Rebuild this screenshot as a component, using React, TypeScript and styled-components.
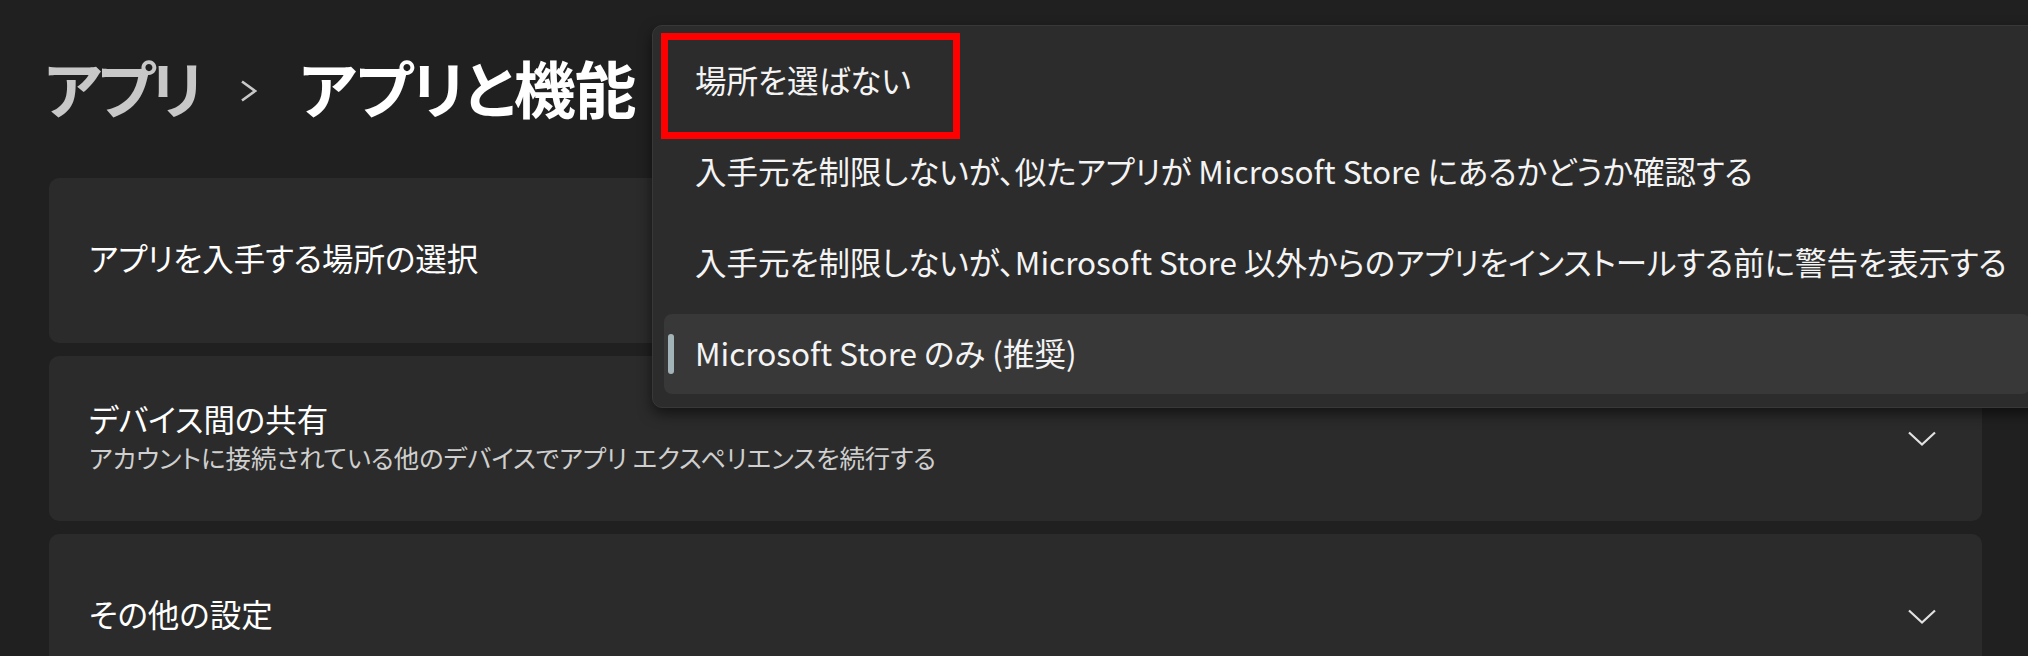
import React from "react";
import styled, { createGlobalStyle } from "styled-components";

const Global = createGlobalStyle`
  html, body {
    margin: 0;
    padding: 0;
    background: #202020;
    overflow: hidden;
  }
  body {
    width: 2028px;
    height: 656px;
    font-family: "Noto Sans CJK JP", "Noto Sans", sans-serif;
    font-feature-settings: "palt";
    color: #ffffff;
  }
`;

const Page = styled.div`
  position: relative;
  width: 2028px;
  height: 656px;
  box-sizing: border-box;
  padding: 0 46px 0 49px;
  overflow: hidden;
`;

const Header = styled.div`
  height: 178px;
  display: flex;
  align-items: center;
  margin-left: -5px;
  padding-bottom: 5px;
  box-sizing: border-box;
  font-size: 62px;
  font-weight: 600;
  letter-spacing: -3px;
`;

const Crumb = styled.span<{ $current?: boolean }>`
  color: ${(p) => (p.$current ? "#ffffff" : "#c8c8c8")};
  line-height: 1;
  letter-spacing: ${(p) => (p.$current ? "-1.3px" : "-4.5px")};
`;

const CrumbSep = styled.span`
  display: flex;
  align-items: center;
  margin: 8px 42px 0 41px;
`;

const Cards = styled.div`
  display: flex;
  flex-direction: column;
  gap: 13px;
`;

const Card = styled.div`
  height: 165px;
  flex-shrink: 0;
  background: #2b2b2b;
  border-radius: 10px;
  display: flex;
  align-items: center;
  justify-content: space-between;
  padding: 0 46px 0 40px;
  box-sizing: border-box;
`;

const CardText = styled.div`
  display: flex;
  flex-direction: column;
  gap: 2px;
  padding-bottom: 7px;
`;

const CardTitle = styled.div`
  font-size: 31.5px;
  line-height: 42px;
  color: #ffffff;
`;

const CardSub = styled.div`
  font-size: 25.4px;
  line-height: 32px;
  color: #cfcfcf;
`;

const Popup = styled.div`
  position: absolute;
  left: 652px;
  top: 25px;
  width: 1390px;
  height: 383px;
  box-sizing: border-box;
  padding: 15px 11px;
  background: #2c2c2c;
  border: 1px solid #383838;
  border-radius: 10px;
  box-shadow: 0 6px 14px rgba(0, 0, 0, 0.55);
  display: flex;
  flex-direction: column;
  gap: 11px;
`;

const Item = styled.div<{ $selected?: boolean }>`
  position: relative;
  height: 80px;
  flex-shrink: 0;
  display: flex;
  align-items: center;
  padding: 0 0 5px 31px;
  box-sizing: border-box;
  border-radius: 8px;
  background: ${(p) => (p.$selected ? "#383838" : "transparent")};
  font-size: 31.5px;
  color: #f4f4f4;
  white-space: nowrap;
`;

const Pill = styled.span`
  position: absolute;
  left: 4px;
  top: 20px;
  width: 6px;
  height: 40px;
  border-radius: 3px;
  background: #a3b4b8;
`;

const Highlight = styled.div`
  position: absolute;
  left: 8px;
  top: 7px;
  width: 299px;
  height: 106px;
  box-sizing: border-box;
  border: 7px solid #ff0000;
  pointer-events: none;
`;

const Chevron = () => (
  <svg width="28" height="15" viewBox="0 0 28 15">
    <polyline points="1,1.5 14,13.5 27,1.5" fill="none" stroke="#e2e2e2" strokeWidth="2.2" />
  </svg>
);

const Sep = () => (
  <svg width="17" height="22" viewBox="0 0 17 22">
    <polyline points="2,1.5 15,11 2,20.5" fill="none" stroke="#c8c8c8" strokeWidth="2.6" />
  </svg>
);

export default function App() {
  return (
    <>
      <Global />
      <Page>
        <Header>
          <Crumb>アプリ</Crumb>
          <CrumbSep>
            <Sep />
          </CrumbSep>
          <Crumb $current>アプリと機能</Crumb>
        </Header>
        <Cards>
          <Card>
            <CardText>
              <CardTitle>アプリを入手する場所の選択</CardTitle>
            </CardText>
          </Card>
          <Card>
            <CardText>
              <CardTitle>デバイス間の共有</CardTitle>
              <CardSub>アカウントに接続されている他のデバイスでアプリ エクスペリエンスを続行する</CardSub>
            </CardText>
            <Chevron />
          </Card>
          <Card>
            <CardText>
              <CardTitle>その他の設定</CardTitle>
            </CardText>
            <Chevron />
          </Card>
        </Cards>
        <Popup>
          <Item>場所を選ばない</Item>
          <Item>入手元を制限しないが、似たアプリが Microsoft Store にあるかどうか確認する</Item>
          <Item>入手元を制限しないが、Microsoft Store 以外からのアプリをインストールする前に警告を表示する</Item>
          <Item $selected>
            <Pill />
            Microsoft Store のみ (推奨)
          </Item>
          <Highlight />
        </Popup>
      </Page>
    </>
  );
}
